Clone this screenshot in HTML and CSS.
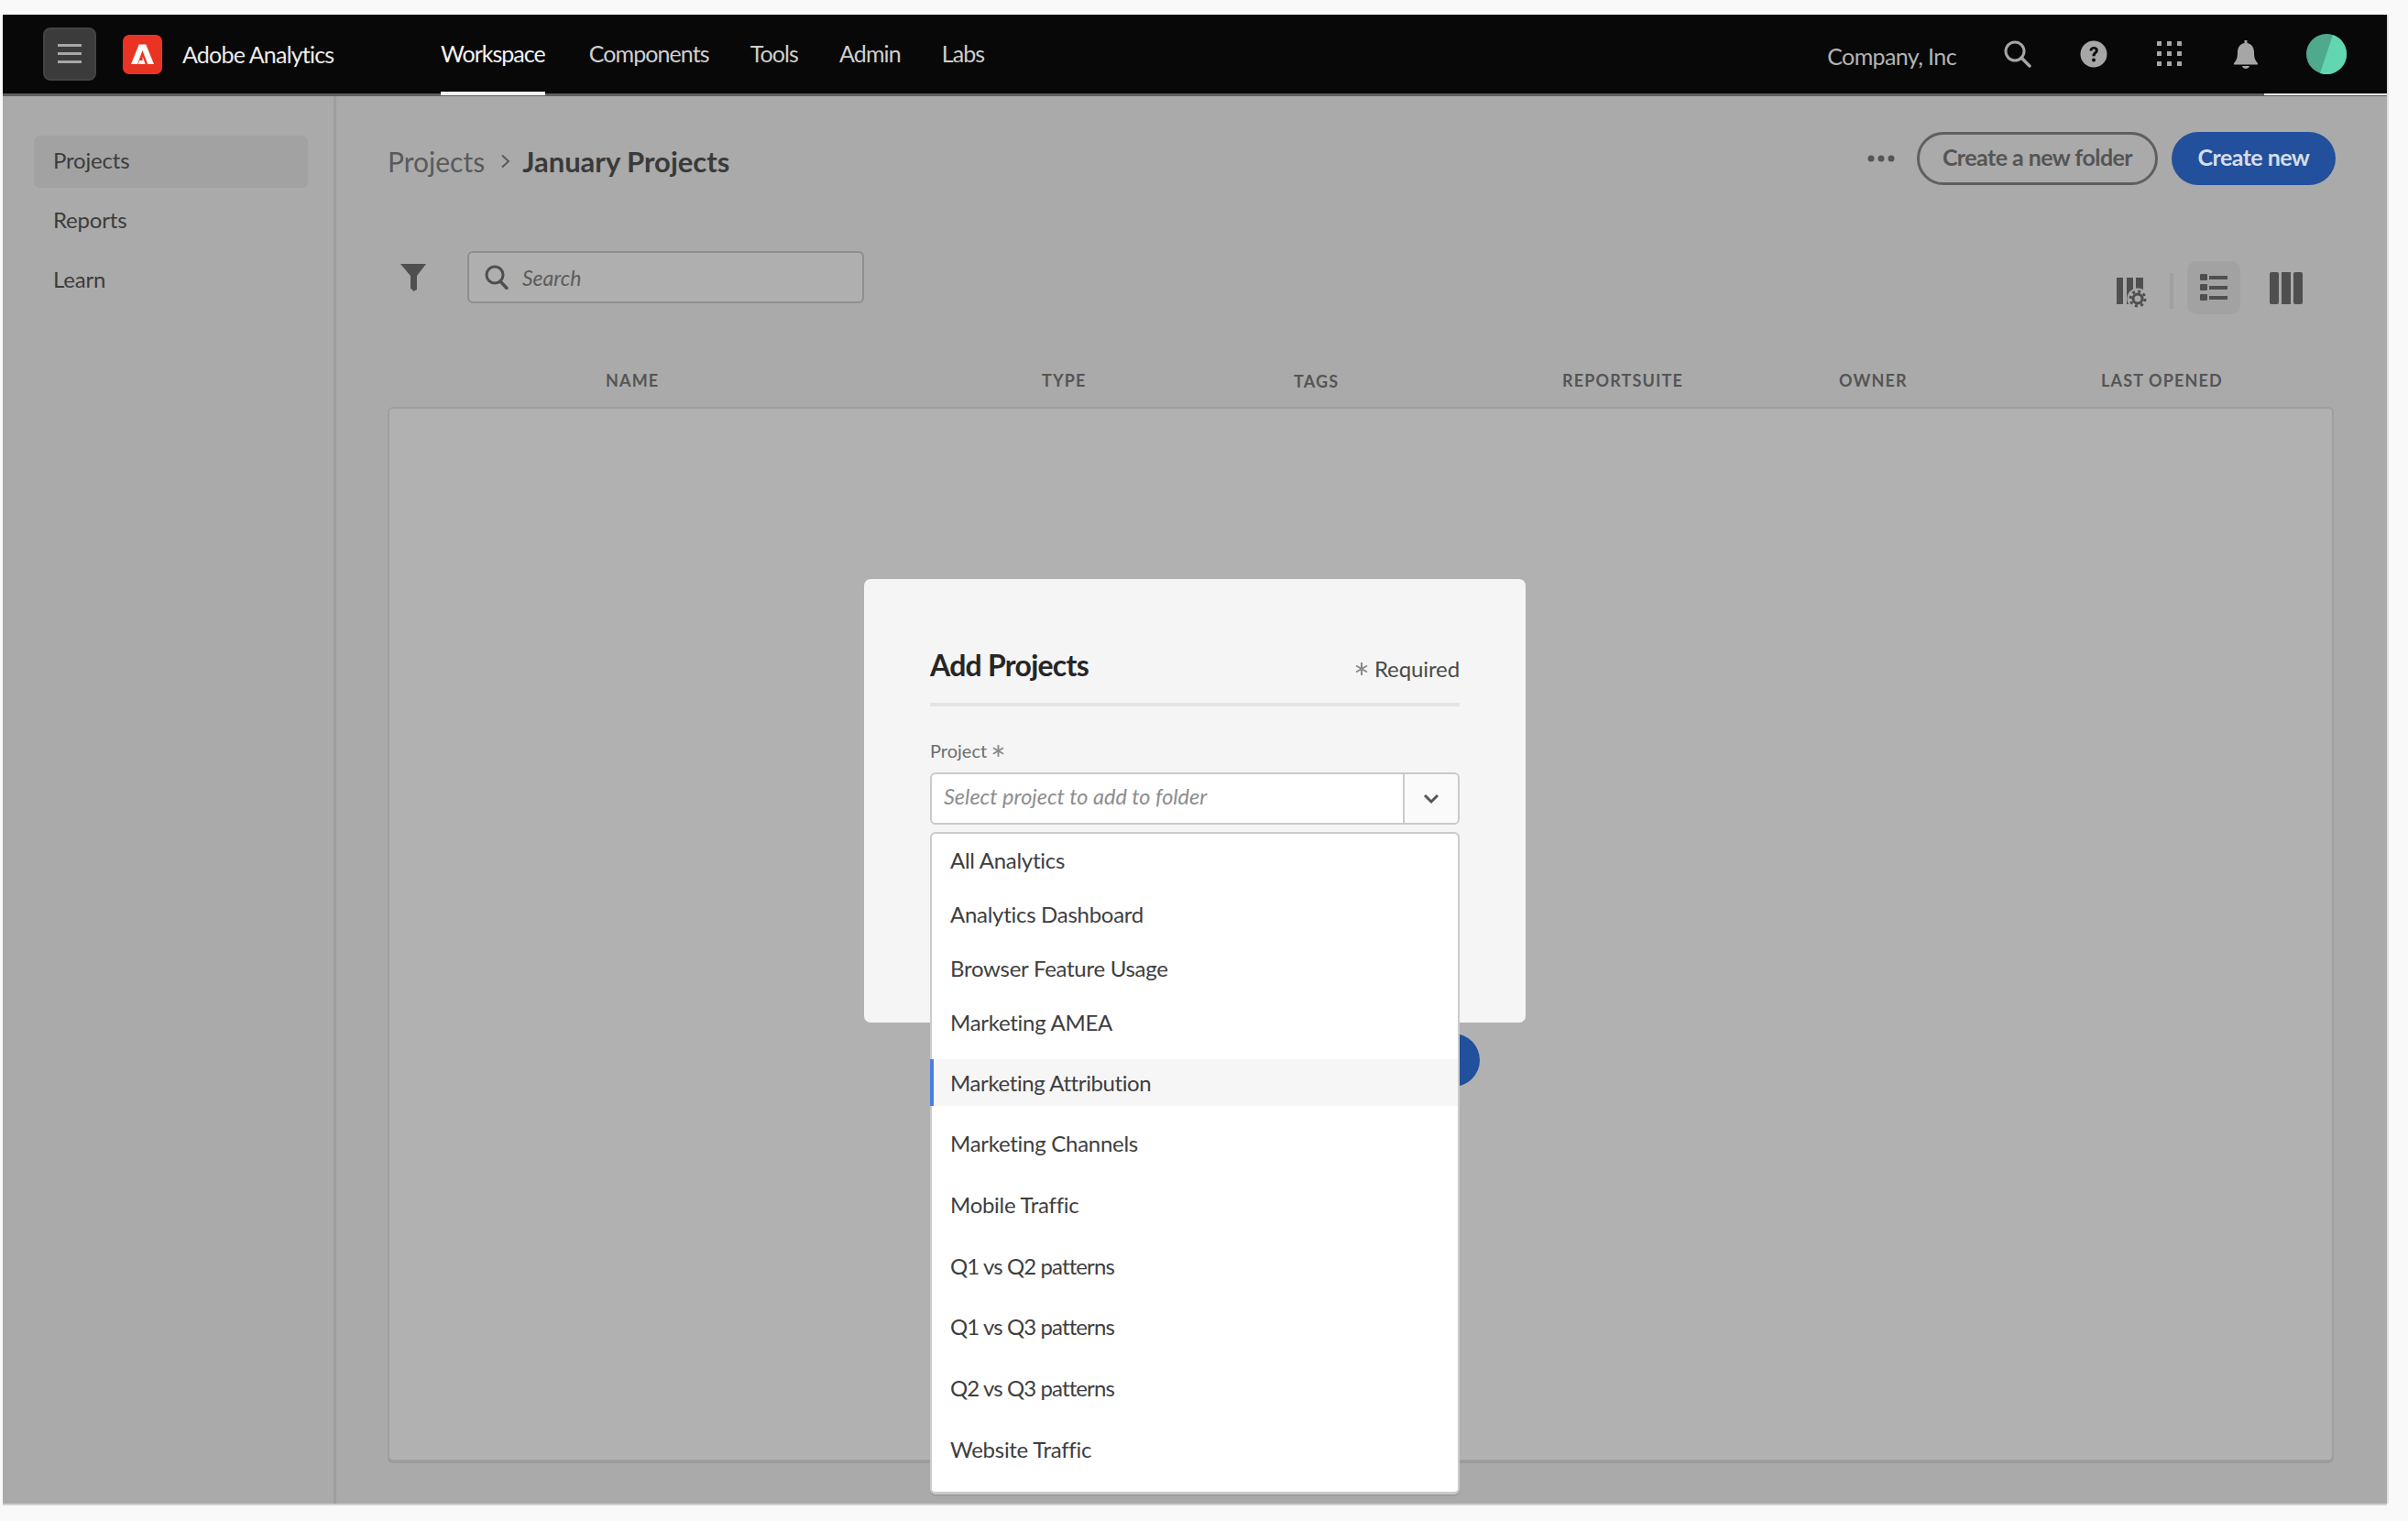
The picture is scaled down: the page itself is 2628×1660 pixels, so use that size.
FILE: index.html
```html
<!DOCTYPE html>
<html lang="en">
<head>
<meta charset="utf-8">
<title>Adobe Analytics - January Projects</title>
<link rel="stylesheet" href="styles.css">
</head>
<body>
<div class="app">
  <header class="topbar">
    <div class="brand">
      <button class="menu-btn" aria-label="Menu">
        <svg width="26" height="22" viewBox="0 0 26 22"><path d="M0 1h26v3H0zM0 10h26v3H0zM0 19h26v3H0z" fill="#a6a6a6" transform="translate(0 -1)"/></svg>
      </button>
      <svg class="logo" width="43" height="43" viewBox="0 0 43 43"><rect width="43" height="43" rx="7" fill="#e93423"/><path d="M9 32 17.7 10.5h7.6L34 32h-6.8L21.500 17 16 32z" fill="#fff"/><path d="M21.500 23.500l3.200 8.500h-8l1.600-4h3.500z" fill="#fff"/></svg>
      <span class="brand-name">Adobe Analytics</span>
    </div>
    <nav class="nav">
      <a class="nav-link active">Workspace</a>
      <a class="nav-link">Components</a>
      <a class="nav-link">Tools</a>
      <a class="nav-link">Admin</a>
      <a class="nav-link">Labs</a>
    </nav>
    <div class="top-right">
      <span class="company">Company, Inc</span>
      <svg class="top-icon" width="30" height="30" viewBox="0 0 30 30"><circle cx="12" cy="12" r="10" fill="none" stroke="#a6a6a6" stroke-width="3"/><path d="M19 19l9 9" stroke="#a6a6a6" stroke-width="3.400" stroke-linecap="round"/></svg>
      <svg class="top-icon" width="30" height="30" viewBox="0 0 30 30"><circle cx="15" cy="15" r="14.500" fill="#a6a6a6"/><path d="M10.500 11.500c0-3 2-4.500 4.700-4.500 2.800 0 4.600 1.600 4.600 4 0 3.300-3.300 3.500-3.300 6.300h-3c0-4 3.200-4.200 3.200-6.200 0-1-.7-1.500-1.600-1.500-1 0-1.700.7-1.700 1.900z" fill="#0a0a0a"/><circle cx="15" cy="21.500" r="2" fill="#0a0a0a"/></svg>
      <svg class="top-icon" width="30" height="30" viewBox="0 0 30 30" fill="#a6a6a6"><rect x="1" y="1" width="5" height="5"/><rect x="12" y="1" width="5" height="5"/><rect x="23" y="1" width="5" height="5"/><rect x="1" y="12" width="5" height="5"/><rect x="12" y="12" width="5" height="5"/><rect x="23" y="12" width="5" height="5"/><rect x="1" y="23" width="5" height="5"/><rect x="12" y="23" width="5" height="5"/><rect x="23" y="23" width="5" height="5"/></svg>
      <svg class="top-icon" width="30" height="32" viewBox="0 0 30 32" fill="#a6a6a6"><path d="M13.500 0h3v3c5 1 7.500 5 7.500 10 0 6 1 8.500 4 12v1.500H2V25c3-3.500 4-6 4-12 0-5 2.500-9 7.500-10z"/><path d="M11 28h8c-.5 2-2 3-4 3s-3.500-1-4-3z"/></svg>
      <svg class="avatar" width="44" height="44" viewBox="0 0 44 44"><circle cx="22" cy="22" r="22" fill="#4fa98d"/><path d="M29 1.100A22 22 0 0 1 15 43z" fill="#62d6b1"/></svg>
    </div>
  </header>

  <div class="body">
    <aside class="sidebar">
      <a class="side-item selected">Projects</a>
      <a class="side-item">Reports</a>
      <a class="side-item">Learn</a>
    </aside>

    <main class="content">
      <div class="head-row">
        <div class="crumbs">
          <span class="crumb">Projects</span>
          <svg class="crumb-sep" width="11" height="16" viewBox="0 0 11 16"><path d="M2 1.500 9 8l-7 6.500" fill="none" stroke="#5a5a5a" stroke-width="2"/></svg>
          <span class="crumb-current">January Projects</span>
        </div>
        <div class="actions">
          <svg class="dots" width="30" height="8" viewBox="0 0 30 8" fill="#555"><circle cx="4" cy="4" r="3.500"/><circle cx="15" cy="4" r="3.500"/><circle cx="26" cy="4" r="3.500"/></svg>
          <button class="btn btn-outline">Create a new folder</button>
          <button class="btn btn-primary">Create new</button>
        </div>
      </div>

      <div class="toolbar">
        <svg class="filter" width="28" height="30" viewBox="0 0 28 30"><path d="M0 0h28L18 13v15l-4 2-1-2-2-1V13z" fill="#4f4f4f"/></svg>
        <div class="search">
          <svg width="26" height="27" viewBox="0 0 26 27"><circle cx="11" cy="11" r="9" fill="none" stroke="#4f4f4f" stroke-width="3"/><path d="M17 18l7 7.500" stroke="#4f4f4f" stroke-width="3.400" stroke-linecap="round"/></svg>
          <span class="search-text">Search</span>
        </div>
        <div class="views">
          <svg class="view-gear" width="34" height="34" viewBox="0 0 34 34"><path d="M0 0h7v29H0zM11 0h7v29h-7zM21 0h8v29h-8z" fill="#4f4f4f"/><circle cx="23" cy="23" r="11.500" fill="#aaa"/><circle cx="23" cy="23" r="5" fill="none" stroke="#4f4f4f" stroke-width="3"/><circle cx="23" cy="23" r="8" fill="none" stroke="#4f4f4f" stroke-width="3" stroke-dasharray="3 3.280"/></svg>
          <span class="view-sep"></span>
          <span class="view-tile">
            <svg width="30" height="30" viewBox="0 0 30 30" fill="#4f4f4f"><rect x="0" y="0" width="8" height="7" rx="1"/><rect x="10" y="2" width="20" height="4"/><rect x="0" y="11" width="8" height="7" rx="1"/><rect x="10" y="13" width="20" height="4"/><rect x="0" y="22" width="8" height="7" rx="1"/><rect x="10" y="24" width="20" height="4"/></svg>
          </span>
          <svg class="view-cols" width="36" height="35" viewBox="0 0 36 35" fill="#4f4f4f"><rect x="0" y="0" width="10" height="35" rx="2"/><rect x="13" y="0" width="10" height="35"/><rect x="26" y="0" width="10" height="35" rx="2"/></svg>
        </div>
      </div>

      <div class="table-head">
        <span>NAME</span><span>TYPE</span><span class="tags">TAGS</span><span>REPORTSUITE</span><span>OWNER</span><span>LAST OPENED</span>
      </div>
      <div class="panel"></div>
    </main>
  </div>

  <section class="modal">
    <span class="peek"></span>
    <div class="modal-head">
      <h2 class="modal-title">Add Projects</h2>
      <span class="required">
        <svg class="star" width="14" height="14" viewBox="0 0 14 14"><path d="M7 0v14M1 3.500l12 7M13 3.500l-12 7" stroke="#8a8a8a" stroke-width="2"/></svg>
        Required
      </span>
    </div>
    <label class="field-label">Project
      <svg class="star" width="13" height="13" viewBox="0 0 14 14"><path d="M7 0v14M1 3.500l12 7M13 3.500l-12 7" stroke="#8a8a8a" stroke-width="2"/></svg>
    </label>
    <div class="combo">
      <span class="combo-text">Select project to add to folder</span>
      <span class="combo-btn">
        <svg width="18" height="12" viewBox="0 0 18 12"><path d="M2 2l7 7 7-7" fill="none" stroke="#555" stroke-width="3"/></svg>
      </span>
    </div>
    <ul class="dropdown">
      <li class="group-a">
        <span class="option">All Analytics</span>
        <span class="option">Analytics Dashboard</span>
        <span class="option">Browser Feature Usage</span>
        <span class="option">Marketing AMEA</span>
      </li>
      <li class="group-b">
        <span class="option focused">Marketing Attribution</span>
        <span class="option">Marketing Channels</span>
        <span class="option">Mobile Traffic</span>
        <span class="option tight">Q1 vs Q2 patterns</span>
        <span class="option tight">Q1 vs Q3 patterns</span>
        <span class="option tight">Q2 vs Q3 patterns</span>
        <span class="option">Website Traffic</span>
      </li>
    </ul>
  </section>
</div>
</body>
</html>
```
FILE: styles.css
```css
* { box-sizing: border-box; }
html, body { margin: 0; height: 100%; }
body {
  background: #f9f9f9;
  padding: 16px 0 0 3px;
  font-family: Lato, "Noto Sans", sans-serif;
  color: #3c3c3c;
  overflow: hidden;
}
.app {
  position: relative;
  width: 2602px;
  height: 1625px;
  background: #aaaaaa;
  display: flex;
  flex-direction: column;
  box-shadow: 0 2px 0 #d0d0d0, 2px 0 0 #e0e0e0;
}

/* top bar */
.topbar {
  position: relative;
  flex: none;
  height: 89px;
  background: #080808;
  border-bottom: 3px solid #5f5f5f;
  display: flex;
  align-items: center;
  padding: 0 44px;
}
.topbar::after {
  content: "";
  position: absolute;
  right: 0;
  bottom: -2px;
  width: 134px;
  height: 2px;
  background: #e6e6e6;
}
.brand { display: flex; align-items: center; width: 434px; flex: none; }
.menu-btn {
  width: 58px;
  height: 58px;
  background: #3b3b3b;
  border: 2px solid #444;
  border-radius: 8px;
  padding: 0;
  display: flex;
  align-items: center;
  justify-content: center;
  margin-right: 29px;
}
.logo { flex: none; margin-right: 22px; }
.brand-name { font-size: 25px; letter-spacing: -0.800px; color: #ececec; white-space: nowrap; }
.nav { display: flex; align-self: stretch; gap: 45px; }
.nav-link {
  display: flex;
  align-items: center;
  height: 88px;
  margin-bottom: -2px;
  padding-bottom: 0;
  font-size: 25px;
  letter-spacing: -0.900px;
  color: #cfcfcf;
  border-bottom: 4px solid transparent;
}
.nav-link.active { color: #f4f4f4; border-bottom-color: #f2f2f2; margin-right: 3px; letter-spacing: -1px; }
.top-right { margin-left: auto; display: flex; align-items: center; }
.company { font-size: 25px; letter-spacing: -0.600px; color: #b4b4b4; margin-right: 52px; margin-top: 4px; }
.top-icon { margin-right: 53px; margin-top: -1px; }
.avatar { margin-left: -2px; margin-right: 0; }
.top-right .top-icon:nth-child(5) { margin-top: 2px; }

/* body */
.body { flex: 1; display: flex; min-height: 0; }
.sidebar {
  flex: none;
  width: 364px;
  border-right: 3px solid #9e9e9e;
  padding: 43px 0 0 34px;
  display: flex;
  flex-direction: column;
  gap: 8px;
}
.side-item {
  width: 299px;
  height: 57px;
  display: flex;
  align-items: center;
  padding: 0 0 5px 21px;
  font-size: 24px;
  letter-spacing: -0.200px;
  color: #3c3c3c;
  border-radius: 6px;
}
.side-item.selected { background: #a2a2a2; }

.content { flex: 1; padding: 39px 58px 0 56px; min-width: 0; }
.head-row { display: flex; align-items: center; justify-content: space-between; height: 58px; }
.crumbs { display: flex; align-items: center; margin-top: 5px; }
.crumb { font-size: 30px; color: #5a5a5a; }
.crumb-sep { margin: 0 13px 0 17px; }
.crumb-current { font-size: 31px; font-weight: 700; color: #3a3a3a; }
.actions { display: flex; align-items: center; }
.dots { margin-right: 24px; }
.btn {
  height: 58px;
  border-radius: 29px;
  font-family: inherit;
  font-size: 25px;
  font-weight: 700;
  letter-spacing: -0.550px;
  padding: 0 0 5px;
}
.btn-outline { width: 263px; background: transparent; border: 3px solid #5f5f5f; color: #555; margin-right: 15px; }
.btn-primary { width: 179px; background: #22509c; border: 0; color: #d5dcea; margin-right: -2px; }

.toolbar { display: flex; align-items: flex-start; height: 69px; margin-top: 72px; }
.filter { margin: 14px 45px 0 14px; flex: none; }
.search {
  width: 433px;
  height: 57px;
  background: #afafaf;
  border: 2px solid #8e8e8e;
  border-radius: 6px;
  display: flex;
  align-items: center;
  padding-left: 17px;
  gap: 15px;
}
.search-text { font-size: 23px; font-style: italic; color: #5c5c5c; }
.views { margin-left: auto; display: flex; align-items: flex-start; padding-top: 11px; }
.view-gear { margin: 18px 24px 0 0; }
.view-sep { width: 4px; height: 39px; background: #a0a0a0; margin: 13px 15px 0 0; }
.view-tile {
  width: 58px;
  height: 58px;
  background: #a2a2a2;
  border-radius: 10px;
  display: flex;
  align-items: center;
  justify-content: center;
  margin-right: 32px;
}
.view-cols { margin: 12px 34px 0 0; }

.table-head {
  display: grid;
  grid-template-columns: 476px 275px 293px 302px 286px auto;
  padding-left: 238px;
  margin-top: 57px;
  height: 30px;
  align-items: center;
  font-size: 18px;
  font-weight: 700;
  letter-spacing: 1.150px;
  color: #555;
}
.table-head .tags { padding-top: 2px; }
.panel {
  height: 1151px;
  margin-top: 14px;
  background: #b1b1b1;
  border: 2px solid #9f9f9f;
  border-radius: 6px;
  box-shadow: 0 2px 0 #9a9a9a;
}

/* modal */
.modal {
  position: absolute;
  left: 940px;
  top: 616px;
  width: 722px;
  height: 484px;
  background: #f5f5f5;
  border-radius: 7px;
  padding: 68px 72px 0;
}
.peek {
  position: absolute;
  right: 50px;
  top: 496px;
  width: 120px;
  height: 58px;
  border-radius: 29px;
  background: #22509c;
}
.modal-head {
  display: flex;
  justify-content: space-between;
  align-items: center;
  height: 71px;
  border-bottom: 4px solid #e4e4e4;
  padding-bottom: 16px;
}
.modal-title { margin: 0; font-size: 32px; font-weight: 700; letter-spacing: -0.750px; color: #262626; }
.required { display: flex; align-items: center; gap: 7px; font-size: 24px; letter-spacing: -0.100px; color: #4a4a4a; margin-top: 8px; }
.field-label { display: flex; align-items: center; gap: 6px; margin-top: 33px; height: 30px; font-size: 20px; color: #6e6e6e; }
.combo {
  margin-top: 9px;
  height: 57px;
  background: #fff;
  border: 2px solid #c9c9c9;
  border-radius: 6px;
  display: flex;
  align-items: center;
}
.combo-text { flex: 1; padding: 0 0 5px 13px; font-size: 23.500px; font-style: italic; color: #8d8d8d; }
.combo-btn {
  width: 60px;
  height: 100%;
  background: #fafafa;
  border-left: 2px solid #c9c9c9;
  border-radius: 0 4px 4px 0;
  display: flex;
  align-items: center;
  justify-content: center;
}
.dropdown {
  position: relative;
  list-style: none;
  margin: 8px 0 0;
  padding: 3px 0 0;
  height: 723px;
  background: #fff;
  border: 2px solid #cbcbcb;
  border-bottom-width: 3px;
  border-radius: 6px;
  box-shadow: 0 2px 0 #9c9c9c;
}
.group-a { display: flex; flex-direction: column; gap: 8px; }
.group-b { display: flex; flex-direction: column; gap: 15.700px; margin-top: 14.500px; }
.option {
  height: 51px;
  display: flex;
  align-items: center;
  padding-left: 20px;
  font-size: 24px;
  letter-spacing: -0.280px;
  color: #3e3e3e;
}
.option.tight { letter-spacing: -0.900px; }
.option.focused {
  background: #f6f6f6;
  margin-left: -2px;
  padding-left: 18px;
  letter-spacing: -0.400px;
  border-left: 4px solid #4a7fe0;
}
```
